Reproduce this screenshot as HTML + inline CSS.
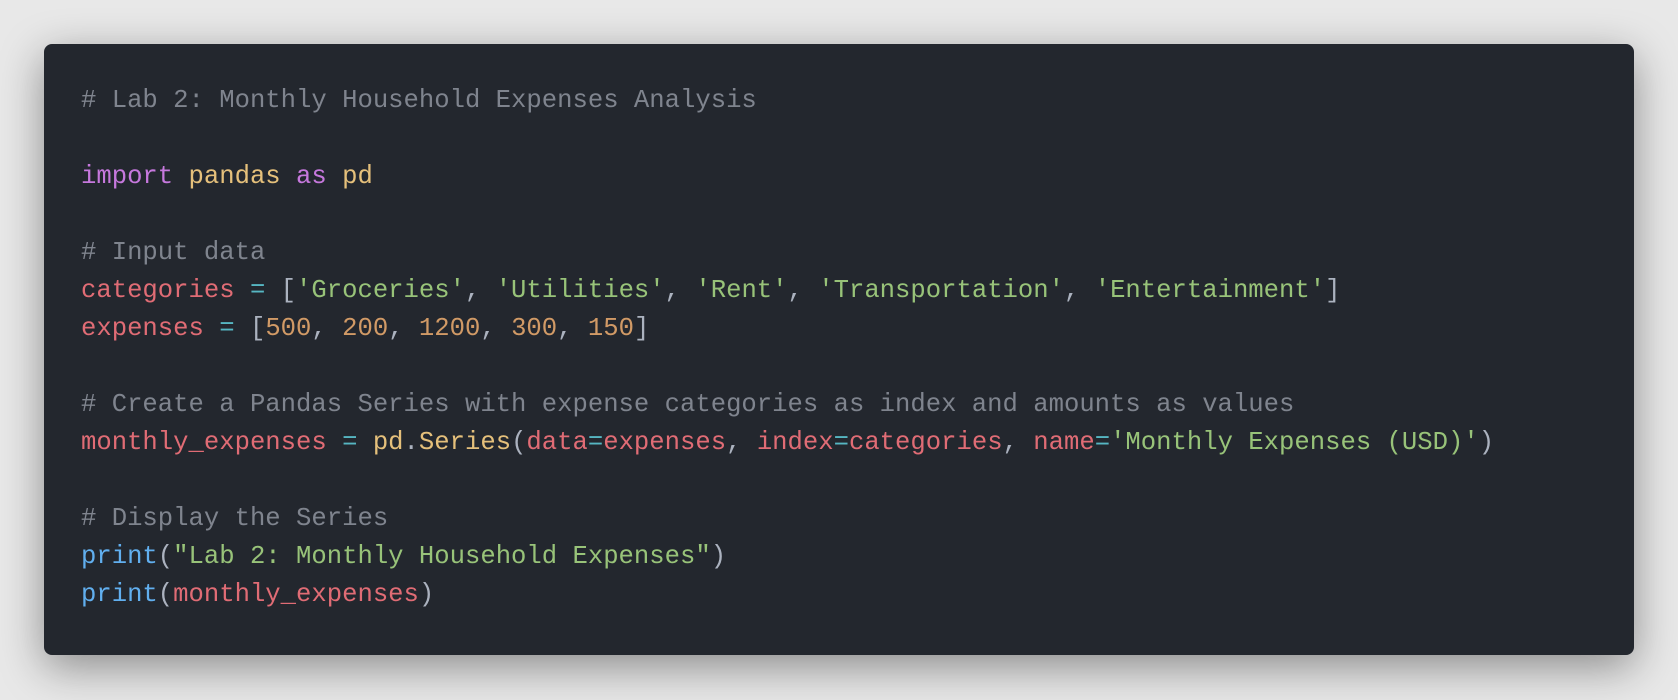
<!DOCTYPE html>
<html><head><style>
html,body{margin:0;padding:0;}
body{width:1678px;height:700px;background:#e8e8e8;position:relative;overflow:hidden;}
.card{position:absolute;left:44px;top:44px;width:1590px;height:611px;background:#23272e;border-radius:8px;box-shadow:0 12px 44px rgba(0,0,0,0.4);}
pre{margin:0;position:absolute;left:81px;top:82px;font-family:"Liberation Mono",monospace;font-size:25.6px;line-height:38px;color:#abb2bf;}
.c{color:#7f848e}.k{color:#c678dd}.y{color:#e5c07b}.r{color:#e06c75}.o{color:#56b6c2}.g{color:#98c379}.n{color:#d19a66}.b{color:#61afef}
</style></head><body>
<div class="card"></div>
<pre><span class="c"># Lab 2: Monthly Household Expenses Analysis</span>

<span class="k">import</span> <span class="y">pandas</span> <span class="k">as</span> <span class="y">pd</span>

<span class="c"># Input data</span>
<span class="r">categories</span> <span class="o">=</span> [<span class="g">'Groceries'</span>, <span class="g">'Utilities'</span>, <span class="g">'Rent'</span>, <span class="g">'Transportation'</span>, <span class="g">'Entertainment'</span>]
<span class="r">expenses</span> <span class="o">=</span> [<span class="n">500</span>, <span class="n">200</span>, <span class="n">1200</span>, <span class="n">300</span>, <span class="n">150</span>]

<span class="c"># Create a Pandas Series with expense categories as index and amounts as values</span>
<span class="r">monthly_expenses</span> <span class="o">=</span> <span class="y">pd</span>.<span class="y">Series</span>(<span class="r">data</span><span class="o">=</span><span class="r">expenses</span>, <span class="r">index</span><span class="o">=</span><span class="r">categories</span>, <span class="r">name</span><span class="o">=</span><span class="g">'Monthly Expenses (USD)'</span>)

<span class="c"># Display the Series</span>
<span class="b">print</span>(<span class="g">"Lab 2: Monthly Household Expenses"</span>)
<span class="b">print</span>(<span class="r">monthly_expenses</span>)</pre>
</body></html>
